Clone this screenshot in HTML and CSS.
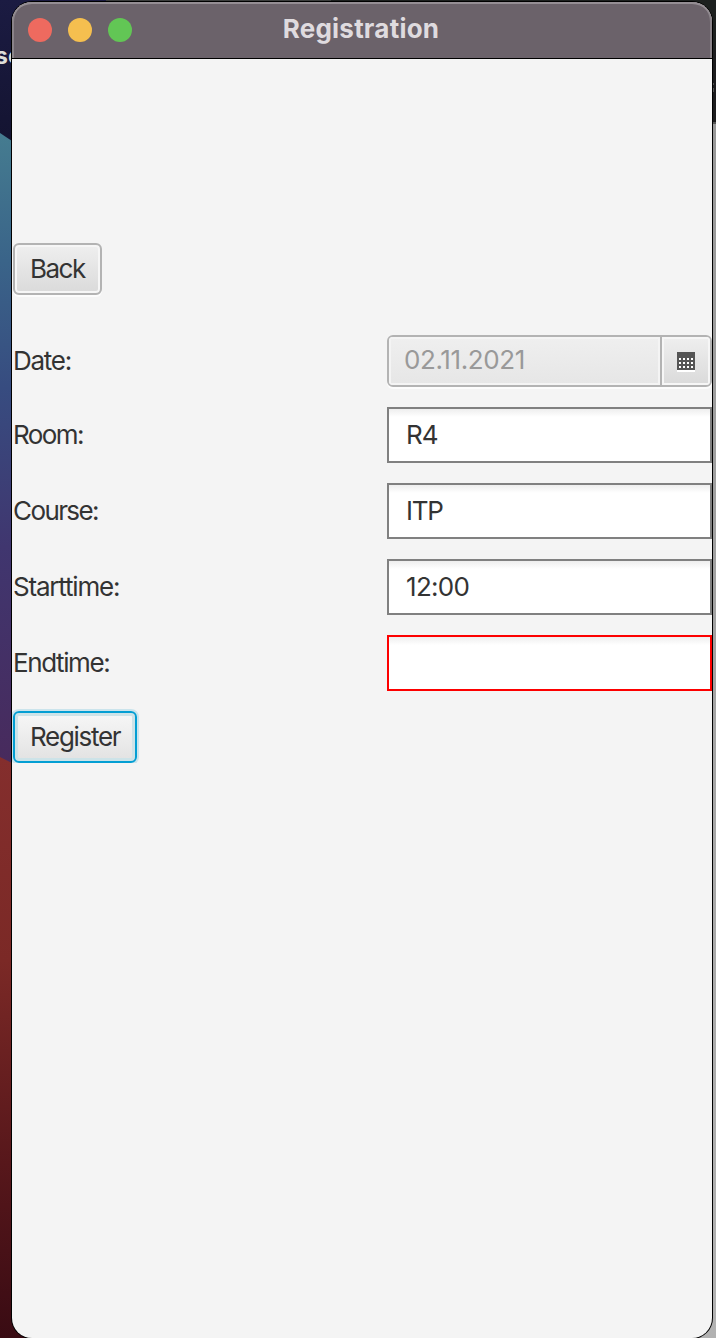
FILE: index.html
```html
<!DOCTYPE html>
<html lang="en">
<head>
<meta charset="utf-8">
<title>Registration</title>
<link rel="stylesheet" href="styles.css">
</head>
<body>
<div class="desktop">
  <svg class="wallpaper" width="716" height="1338" viewBox="0 0 716 1338" aria-hidden="true">
    <defs>
      <linearGradient id="navy" x1="0" y1="0" x2="0" y2="1"><stop offset="0" stop-color="#1b1b42"/><stop offset="1" stop-color="#13132f"/></linearGradient>
      <linearGradient id="blue" x1="0" y1="0" x2="0" y2="1"><stop offset="0" stop-color="#457c90"/><stop offset=".2" stop-color="#3a6489"/><stop offset=".4" stop-color="#374c80"/><stop offset=".65" stop-color="#40366f"/><stop offset="1" stop-color="#482a5c"/></linearGradient>
      <linearGradient id="red" x1="0" y1="0" x2="0" y2="1"><stop offset="0" stop-color="#842e2d"/><stop offset=".35" stop-color="#7b2926"/><stop offset=".7" stop-color="#57171b"/><stop offset="1" stop-color="#390b13"/></linearGradient>
      <linearGradient id="grey" x1="0" y1="0" x2="0" y2="1"><stop offset="0" stop-color="#989898"/><stop offset="1" stop-color="#b2b2b2"/></linearGradient>
    </defs>
    <rect width="200" height="160" fill="url(#navy)"/>
    <path d="M0 133 L12 141 V770 H0Z" fill="url(#blue)"/>
    <path d="M0 757 L12 763 V1310 L40 1338 H0Z" fill="url(#red)"/>
    <rect x="106" width="225" height="2" fill="#3b3d3c"/>
    <rect x="331" width="385" height="50" fill="#1d201f"/>
    <rect x="690" y="50" width="26" height="72" fill="#1c1c1e"/>
    <rect x="713" y="122" width="3" height="2" fill="#555"/>
    <rect x="690" y="124" width="26" height="1214" fill="url(#grey)"/>
    <path d="M713.5 83v2M713.5 88v4" stroke="#555"/>
  </svg>
  <span class="behind">sc</span>
  <main class="window">
    <header class="titlebar">
      <div class="lights"><i class="light close"></i><i class="light minimise"></i><i class="light zoom"></i></div>
      <h1 class="title">Registration</h1>
    </header>
    <form class="form">
      <div class="actions back-row"><button type="button" class="button back">Back</button></div>
      <div class="row">
        <span class="label date-label">Date:</span>
        <div class="picker"><span class="picker-text">02.11.2021</span>
          <span class="picker-button"><svg width="18" height="20" viewBox="0 0 18 20" shape-rendering="crispEdges">
            <path d="M0 2h18v18H0z" fill="#fff"/><path d="M0 0h18v18H0z" fill="#555"/>
            <path d="M2 7h14M2 11h14M2 15h14" stroke="#fff" stroke-width="2" stroke-dasharray="2 2"/>
          </svg></span>
        </div>
      </div>
      <div class="row"><span class="label room-label">Room:</span><div class="field">R4</div></div>
      <div class="row"><span class="label course-label">Course:</span><div class="field course">ITP</div></div>
      <div class="row"><span class="label start-label">Starttime:</span><div class="field start">12:00</div></div>
      <div class="row"><span class="label end-label">Endtime:</span><div class="field invalid"></div></div>
      <div class="actions"><button type="button" class="button register">Register</button></div>
    </form>
  </main>
</div>
</body>
</html>
```
FILE: styles.css
```css
* { box-sizing: border-box; }
body { margin: 0; font-family: Inter, "Liberation Sans", sans-serif; color: #333; }
.desktop { position: relative; width: 716px; height: 1338px; overflow: hidden; padding: 2px 4px 0 12px; background: #17183a; }
.wallpaper { position: absolute; left: 0; top: 0; }
.behind { position: absolute; left: -5px; top: 43px; font-size: 23px; line-height: 26px; font-weight: 700; color: #deded9; }
.window { position: relative; width: 700px; height: 1336px; border-radius: 20px; background: #f4f4f4; box-shadow: 0 0 0 1px #000; display: flex; flex-direction: column; }
.titlebar { height: 57px; flex: none; display: grid; grid-template-columns: 1fr auto 1fr; align-items: center; background: #6b626a; border-radius: 20px 20px 0 0; border-bottom: 1px solid #000; box-shadow: inset 0 2px 0 #958e94, inset 2px 0 0 #8a8389, inset -2px 0 0 #8a8389; }
.lights { display: flex; gap: 16px; padding-left: 16px; }
.light { width: 24px; height: 24px; border-radius: 50%; }
.close { background: #ee6a5f; }
.minimise { background: #f5bf4f; }
.zoom { background: #62c655; }
.title { margin: 0; padding: 0 2px 3px 0; font-size: 26px; font-weight: 700; color: #dfdbdf; letter-spacing: .22px; line-height: 32px; }
.form { padding-top: 184px; display: flex; flex-direction: column; gap: 20px; overflow: hidden; }
.actions { display: flex; padding: 0 0 3px 1px; margin-bottom: -3px; }
.back-row { margin-bottom: 17px; }
.row { display: grid; grid-template-columns: 375px 325px; align-items: center; }
.label, .field, .picker, .button { font-size: 26px; line-height: 32px; letter-spacing: -.9px; white-space: nowrap; }
.label { padding-left: 1px; }
.date-label { letter-spacing: -1.25px; }
.room-label { letter-spacing: -1.6px; }
.course-label { letter-spacing: -1.6px; }
.start-label { letter-spacing: -1.2px; }
.end-label { letter-spacing: -1.4px; }
.button { font-family: inherit; text-align: left; color: #333; height: 52px; padding: 0 0 0 15px; border: 2px solid #b3b3b3; border-radius: 6px; background: linear-gradient(#efefef, #dadada); box-shadow: inset 0 0 0 2px #f6f6f6, 0 2px 0 #fcfcfc; }
.button.back { width: 89px; letter-spacing: -1.5px; }
.button.register { width: 124px; letter-spacing: -1.3px; border-color: #039ed3; background: linear-gradient(#f7f7f7, #e2e2e2); box-shadow: inset 0 0 0 3px #cde3e8, 0 0 0 2px #cbe4ec; }
.picker { height: 52px; display: grid; grid-template-columns: 1fr 50px; border: 2px solid #b3b3b3; border-radius: 6px; background: #eee; box-shadow: 0 2px 0 #fcfcfc; color: #999; overflow: hidden; letter-spacing: -.4px; }
.picker-text { padding: 7px 0 0 15px; background: linear-gradient(#efefef, #e6e6e6); box-shadow: inset 0 0 0 2px #f4f4f4; }
.picker-button { border-left: 2px solid #b3b3b3; display: grid; place-items: center; background: linear-gradient(#efefef, #dadada); box-shadow: inset 0 0 0 2px #f6f6f6; padding-top: 1px; }
.field { height: 56px; border: 2px solid #808080; padding: 10px 17px; background: linear-gradient(#eee, #fff 8px); }
.course { letter-spacing: -1.3px; }
.start { letter-spacing: -.7px; }
.invalid { border-color: #fd0000; }
```
